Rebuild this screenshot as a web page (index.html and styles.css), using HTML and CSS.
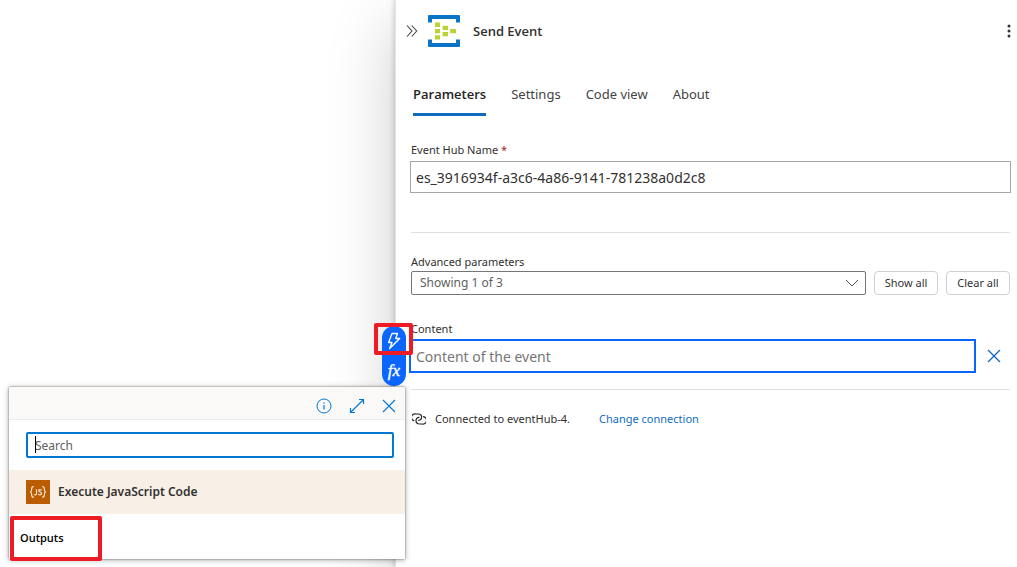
FILE: index.html
```
<!DOCTYPE html>
<html lang="en">
<head>
<meta charset="utf-8">
<title>Send Event</title>
<link rel="stylesheet" href="styles.css">
</head>
<body>
<div class="app">
  <div class="canvas"></div>
  <main class="panel">
    <header class="panel-header">
      <button class="icon-button collapse" type="button" aria-label="Collapse">
        <svg width="12" height="14" viewBox="0 0 12 14" fill="none" stroke="#444" stroke-width="1.1"><path d="M1 1.5 6 7 1 12.5M5.7 1.5 10.7 7 5.7 12.5"/></svg>
      </button>
      <svg class="brand" width="32" height="32" viewBox="0 0 32 32" aria-hidden="true">
        <path fill="#0a74c6" d="M1 0h30a1 1 0 0 1 1 1v6.500h-4V4H4v3.500H0V1a1 1 0 0 1 1-1ZM0 24.500h4V28h24v-3.500h4V31a1 1 0 0 1-1 1H1a1 1 0 0 1-1-1Z"/>
        <path fill="#b8d432" d="M7 7.500h5v4.500H7ZM7 14h5v4.300H7ZM7 20.300h5v4.200H7ZM14.600 10.800H20V15h-5.400ZM14.600 17H20v4.200h-5.400ZM22.200 14H28v4.300h-5.800Z"/>
      </svg>
      <h1 class="title">Send Event</h1>
      <button class="icon-button more" type="button" aria-label="More">
        <svg width="4" height="14" viewBox="0 0 4 14" fill="#333"><circle cx="2" cy="2" r="1.500"/><circle cx="2" cy="7" r="1.500"/><circle cx="2" cy="12" r="1.500"/></svg>
      </button>
    </header>
    <nav class="tabs" role="tablist">
      <button class="tab tab-active" type="button" role="tab" aria-selected="true">Parameters</button>
      <button class="tab" type="button" role="tab">Settings</button>
      <button class="tab" type="button" role="tab">Code view</button>
      <button class="tab" type="button" role="tab">About</button>
    </nav>
    <section class="section hub">
      <label class="label" for="hub">Event Hub Name <span class="required">*</span></label>
      <input class="field" id="hub" type="text" value="es_3916934f-a3c6-4a86-9141-781238a0d2c8">
    </section>
    <section class="section advanced">
      <label class="label" for="advanced">Advanced parameters</label>
      <div class="row">
        <div class="select-wrap">
          <select class="select" id="advanced"><option>Showing 1 of 3</option></select>
          <svg class="chevron" width="14" height="8" viewBox="0 0 14 8" fill="none" stroke="#555"><path d="M1 1l6 6 6-6"/></svg>
        </div>
        <button class="button" type="button">Show all</button>
        <button class="button" type="button">Clear all</button>
      </div>
      <label class="label label-content" for="content">Content</label>
      <div class="content-row">
        <div class="content-wrap">
          <input class="field field-active" id="content" type="text" placeholder="Content of the event">
          <div class="token-picker">
            <button class="token-button" type="button" aria-label="Dynamic content">
              <svg width="16" height="18" viewBox="0 0 16 18" fill="none" stroke="#fff" stroke-width="1.300" stroke-linejoin="round"><path d="M6 1.500h5.500L9.700 6.500h4L3.600 16.500 6 10.500H2.600Z"/></svg>
            </button>
            <button class="token-button fx" type="button">fx</button>
          </div>
          <span class="mark mark-token"></span>
        </div>
        <button class="icon-button clear" type="button" aria-label="Remove">
          <svg width="14" height="14" viewBox="0 0 14 14" fill="none" stroke="#1068bf" stroke-width="1.300"><path d="M1 1l12 12M13 1 1 13"/></svg>
        </button>
      </div>
    </section>
    <footer class="connection">
      <svg width="14" height="12" viewBox="0 0 14 12" fill="none" stroke="#222" stroke-width="1.200" stroke-linecap="round"><path d="M1.800 7.600A3.400 3.400 0 0 1 4 1h2.200c1.900 0 3.400 1.300 3.400 3.100S8.300 7.300 6.600 7.300"/><path d="M11.500 3.600A3.700 3.700 0 0 1 10 11H7.600c-2 0-3.600-1.400-3.600-3.400s1.400-3.300 3-3.300"/></svg>
      <span>Connected to eventHub-4.</span>
      <a class="link" href="#">Change connection</a>
    </footer>
  </main>
  <aside class="popup">
    <div class="popup-bar">
      <button class="icon-button" type="button" aria-label="Information">
        <svg width="16" height="16" viewBox="0 0 16 16" fill="none" stroke="#0078d4"><circle cx="8" cy="8" r="7"/><path stroke-width="1.200" d="M8 7v4.500M8 4.500v1.300"/></svg>
      </button>
      <button class="icon-button" type="button" aria-label="Expand">
        <svg width="16" height="16" viewBox="0 0 16 16" fill="none" stroke="#0078d4" stroke-width="1.200"><path d="M1.500 14.500 14.500 1.500M10 1.500h4.500V6M1.500 10v4.500H6"/></svg>
      </button>
      <button class="icon-button" type="button" aria-label="Close">
        <svg width="14" height="14" viewBox="0 0 14 14" fill="none" stroke="#0078d4" stroke-width="1.100"><path d="M1 1l12 12M13 1 1 13"/></svg>
      </button>
    </div>
    <div class="search">
      <input class="search-input" type="text" placeholder="Search" aria-label="Search">
      <span class="caret"></span>
    </div>
    <div class="group">
      <svg width="24" height="24" viewBox="0 0 24 24" aria-hidden="true"><rect width="24" height="24" fill="#ba5d00"/><g fill="none" stroke="#f6e5d5" stroke-width="1.200" stroke-linecap="round" stroke-linejoin="round"><path d="M7.500 6.500c-1.800 0-1.800.8-1.800 2.200 0 1.800 0 2.800-1.200 3.100 1.200.3 1.200 1.300 1.200 3.100 0 1.400 0 2.200 1.800 2.200M16.500 6.500c1.800 0 1.800.8 1.800 2.200 0 1.800 0 2.800 1.200 3.100-1.200.3-1.200 1.300-1.200 3.100 0 1.400 0 2.200-1.800 2.200"/><path d="M10.500 9.500v4c0 1.200-.8 1.600-1.800 1.200M15.300 10c-1-.7-2.500-.5-2.500.7 0 1.500 2.700 1 2.700 2.700 0 1.400-1.700 1.700-2.900 1"/></g></svg>
      <span>Execute JavaScript Code</span>
    </div>
    <div class="outputs">Outputs<span class="mark mark-outputs"></span></div>
  </aside>
</div>
</body>
</html>
```
FILE: styles.css
```
* { box-sizing: border-box; }
body { margin: 0; background: #fff; color: #323130; font: 12px/16px "Noto Sans", "Open Sans", sans-serif; }
button, input, select { font: inherit; color: inherit; margin: 0; }
.app { position: relative; display: grid; grid-template-columns: 395fr 622fr; min-height: 100vh; overflow: hidden; }
.canvas { background: #fff; }
.panel { background: #fff; border-left: 1px solid #e4e4e4; box-shadow: 0 0 6px rgba(0, 0, 0, .24), 0 24px 64px rgba(0, 0, 0, .2); padding: 15px 6px 0 14px; }
.icon-button { display: flex; align-items: center; justify-content: center; padding: 0; border: 0; background: none; }
.panel-header { display: flex; align-items: center; margin-left: -4px; }
.collapse { margin-right: 10px; }
.title { margin: 0 auto 0 13px; font: 600 13px/20px "Open Sans", sans-serif; }
.tabs { display: flex; gap: 25px; margin: 35px 0 0 3px; }
.tab { border: 0; border-bottom: 3px solid transparent; background: none; padding: 2px 0 9px; font-size: 13px; line-height: 20px; color: #444; }
.tab-active { font-family: "Open Sans", sans-serif; font-weight: 600; color: #242424; border-image: linear-gradient(#0f6cbd, #0f6cbd) 1; }
.label { display: block; line-height: 16px; padding-left: 1px; font-size: 11px; }
.required { color: #a4262c; }
.hub { padding: 26px 0 39px; }
.field { display: block; width: 100%; height: 32px; border: 1px solid #a6a6a6; padding: 0 5px; background: #fff; font-size: 14px; border-radius: 0; outline: 0; }
.hub .field { margin-top: 3px; }
.advanced { margin: 0 1px; border-top: 1px solid #e0e0e0; border-bottom: 1px solid #e0e0e0; padding: 21px 0 16px; }
.advanced .label { padding-left: 0; }
.row { display: flex; gap: 8px; margin-top: 1px; }
.select-wrap { flex: 1; display: grid; align-items: center; }
.select { grid-area: 1 / 1; appearance: none; width: 100%; height: 24px; border: 1px solid #767676; border-radius: 2px; background: #fff; padding: 0 8px; font-size: 12px; color: #616161; }
.chevron { grid-area: 1 / 1; justify-self: end; margin-right: 7px; pointer-events: none; }
.button { width: 64px; height: 24px; border: 1px solid #d1d1d1; border-radius: 4px; background: #fff; padding: 0; font-size: 11px; }
.label-content { margin-top: 26px; }
.content-row { display: flex; align-items: center; gap: 11px; margin: 2px 0 0 -2px; }
.content-wrap { position: relative; flex: 1; }
.field-active { height: 34px; border: 2px solid #0a66ff; }
.field-active::placeholder { color: #757575; }
.clear { width: 14px; height: 14px; margin-right: 9px; }
.token-picker { position: absolute; left: -27px; top: -13px; width: 24px; border-radius: 12px; background: #0a66ff; overflow: hidden; }
.token-button { display: flex; align-items: center; justify-content: center; width: 24px; height: 30px; border: 0; padding: 0; background: none; color: #fff; }
.fx { font: italic 17px/20px "Liberation Serif", serif; -webkit-text-stroke: 0.4px #fff; }
.mark { position: absolute; border: 4px solid #ed1c24; border-radius: 2px; pointer-events: none; }
.mark-token { left: -35px; top: -16px; width: 39px; height: 32px; }
.connection { display: flex; align-items: center; padding: 21px 0 0 2px; font-size: 11px; }
.connection span { margin: 0 29px 0 9px; }
.link { color: #0f6cbd; text-decoration: none; }
.popup { position: absolute; left: 9px; top: 387px; width: 396px; background: #fff; box-shadow: 0 0 2px rgba(0, 0, 0, .5), 0 1px 6px rgba(0, 0, 0, .3); }
.popup-bar { display: flex; justify-content: flex-end; align-items: center; gap: 17px; height: 33px; padding: 5px 9px 0 0; background: #faf9f8; border-bottom: 1px solid #edebe9; }
.search { position: relative; padding: 12px 11px 12px 17px; }
.search-input { display: block; width: 100%; height: 26px; border: 2px solid #0078d4; border-radius: 2px; padding: 0 7px; font-size: 12px; outline: 0; }
.search-input::placeholder { color: #605e5c; }
.caret { position: absolute; left: 26px; top: 16px; width: 1px; height: 17px; background: #000; }
.group { display: flex; align-items: center; gap: 8px; height: 44px; padding-left: 17px; background: #f8efe7; font-size: 12px; font-weight: 600; }
.outputs { position: relative; padding: 16px 11px 13px; font-family: "Open Sans", sans-serif; font-size: 11px; font-weight: 600; color: #000; }
.mark-outputs { left: 1px; top: 2px; width: 92px; height: 45px; }
```
